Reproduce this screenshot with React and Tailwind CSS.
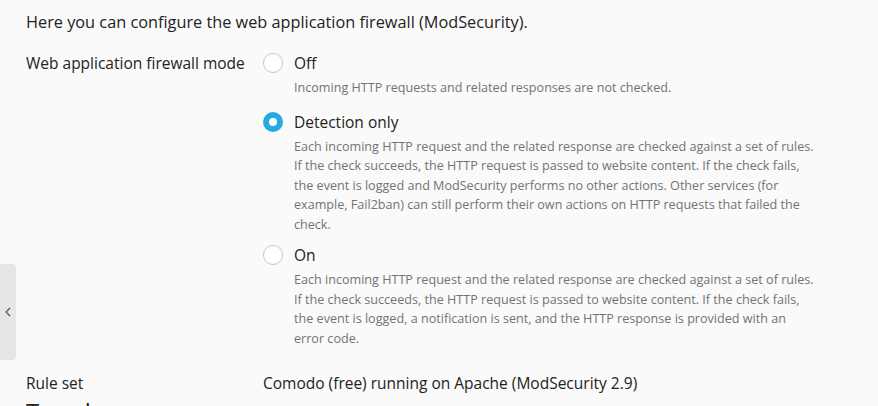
import React, { useState } from 'react';

const COMMON = [
  'Each incoming HTTP request and the related response are checked against a set of rules.',
  'If the check succeeds, the HTTP request is passed to website content. If the check fails,',
];

const MODES = [
  {
    id: 'off',
    label: 'Off',
    gap: 'mt-0',
    lines: ['Incoming HTTP requests and related responses are not checked.'],
  },
  {
    id: 'detection',
    label: 'Detection only',
    gap: 'mt-[14px]',
    lines: [
      ...COMMON,
      'the event is logged and ModSecurity performs no other actions. Other services (for',
      'example, Fail2ban) can still perform their own actions on HTTP requests that failed the',
      'check.',
    ],
  },
  {
    id: 'on',
    label: 'On',
    gap: 'mt-[11px]',
    lines: [
      ...COMMON,
      'the event is logged, a notification is sent, and the HTTP response is provided with an',
      'error code.',
    ],
  },
];

const Radio = ({ checked }) =>
  checked ? (
    <span className="flex h-[20px] w-[20px] shrink-0 items-center justify-center rounded-full bg-[#28a9e0]">
      <span className="h-[8px] w-[8px] rounded-full bg-white" />
    </span>
  ) : (
    <span className="h-[20px] w-[20px] shrink-0 rounded-full border border-[#c6c6c6] bg-white" />
  );

const App = () => {
  const [mode, setMode] = useState('detection');

  return (
    <div className="relative h-[406px] overflow-hidden bg-[#fafafa] font-['Open_Sans',sans-serif] text-[15.5px] text-[#222]">
      {/* collapsed side panel */}
      <div className="absolute left-0 top-[264px] flex h-[96px] w-[16px] items-center justify-center rounded-r-[4px] bg-[#e6e6e6]">
        <svg width="6" height="10" viewBox="0 0 6 10" fill="none" stroke="#555" strokeWidth="1.2">
          <path d="M5 1 1 5l4 4" />
        </svg>
      </div>

      <div className="pl-[26px] pt-[12px]">
        <p className="text-[16.3px] leading-[20px]">Here you can configure the web application firewall (ModSecurity).</p>

        <div className="mt-[21px] flex">
          <div className="w-[237px] shrink-0 leading-[20px]">Web application firewall mode</div>
          <div className="flex flex-col">
            {MODES.map((m) => (
              <label key={m.id} className={`${m.gap} flex cursor-pointer gap-[11px]`} onClick={() => setMode(m.id)}>
                <Radio checked={mode === m.id} />
                <div>
                  <div className="leading-[20px]">{m.label}</div>
                  <div className="mt-[5px] text-[12.6px] leading-[19.5px] text-[#737373]">
                    {m.lines.map((line) => (
                      <div key={line} className="whitespace-nowrap">{line}</div>
                    ))}
                  </div>
                </div>
              </label>
            ))}
          </div>
        </div>

        <div className="mt-[25px] flex leading-[20px]">
          <div className="w-[237px] shrink-0">Rule set</div>
          <div>Comodo (free) running on Apache (ModSecurity 2.9)</div>
        </div>

        <h2 className="mt-[3px] text-[24px] leading-[32px]">Tweaks</h2>
      </div>
    </div>
  );
};

export default App;
